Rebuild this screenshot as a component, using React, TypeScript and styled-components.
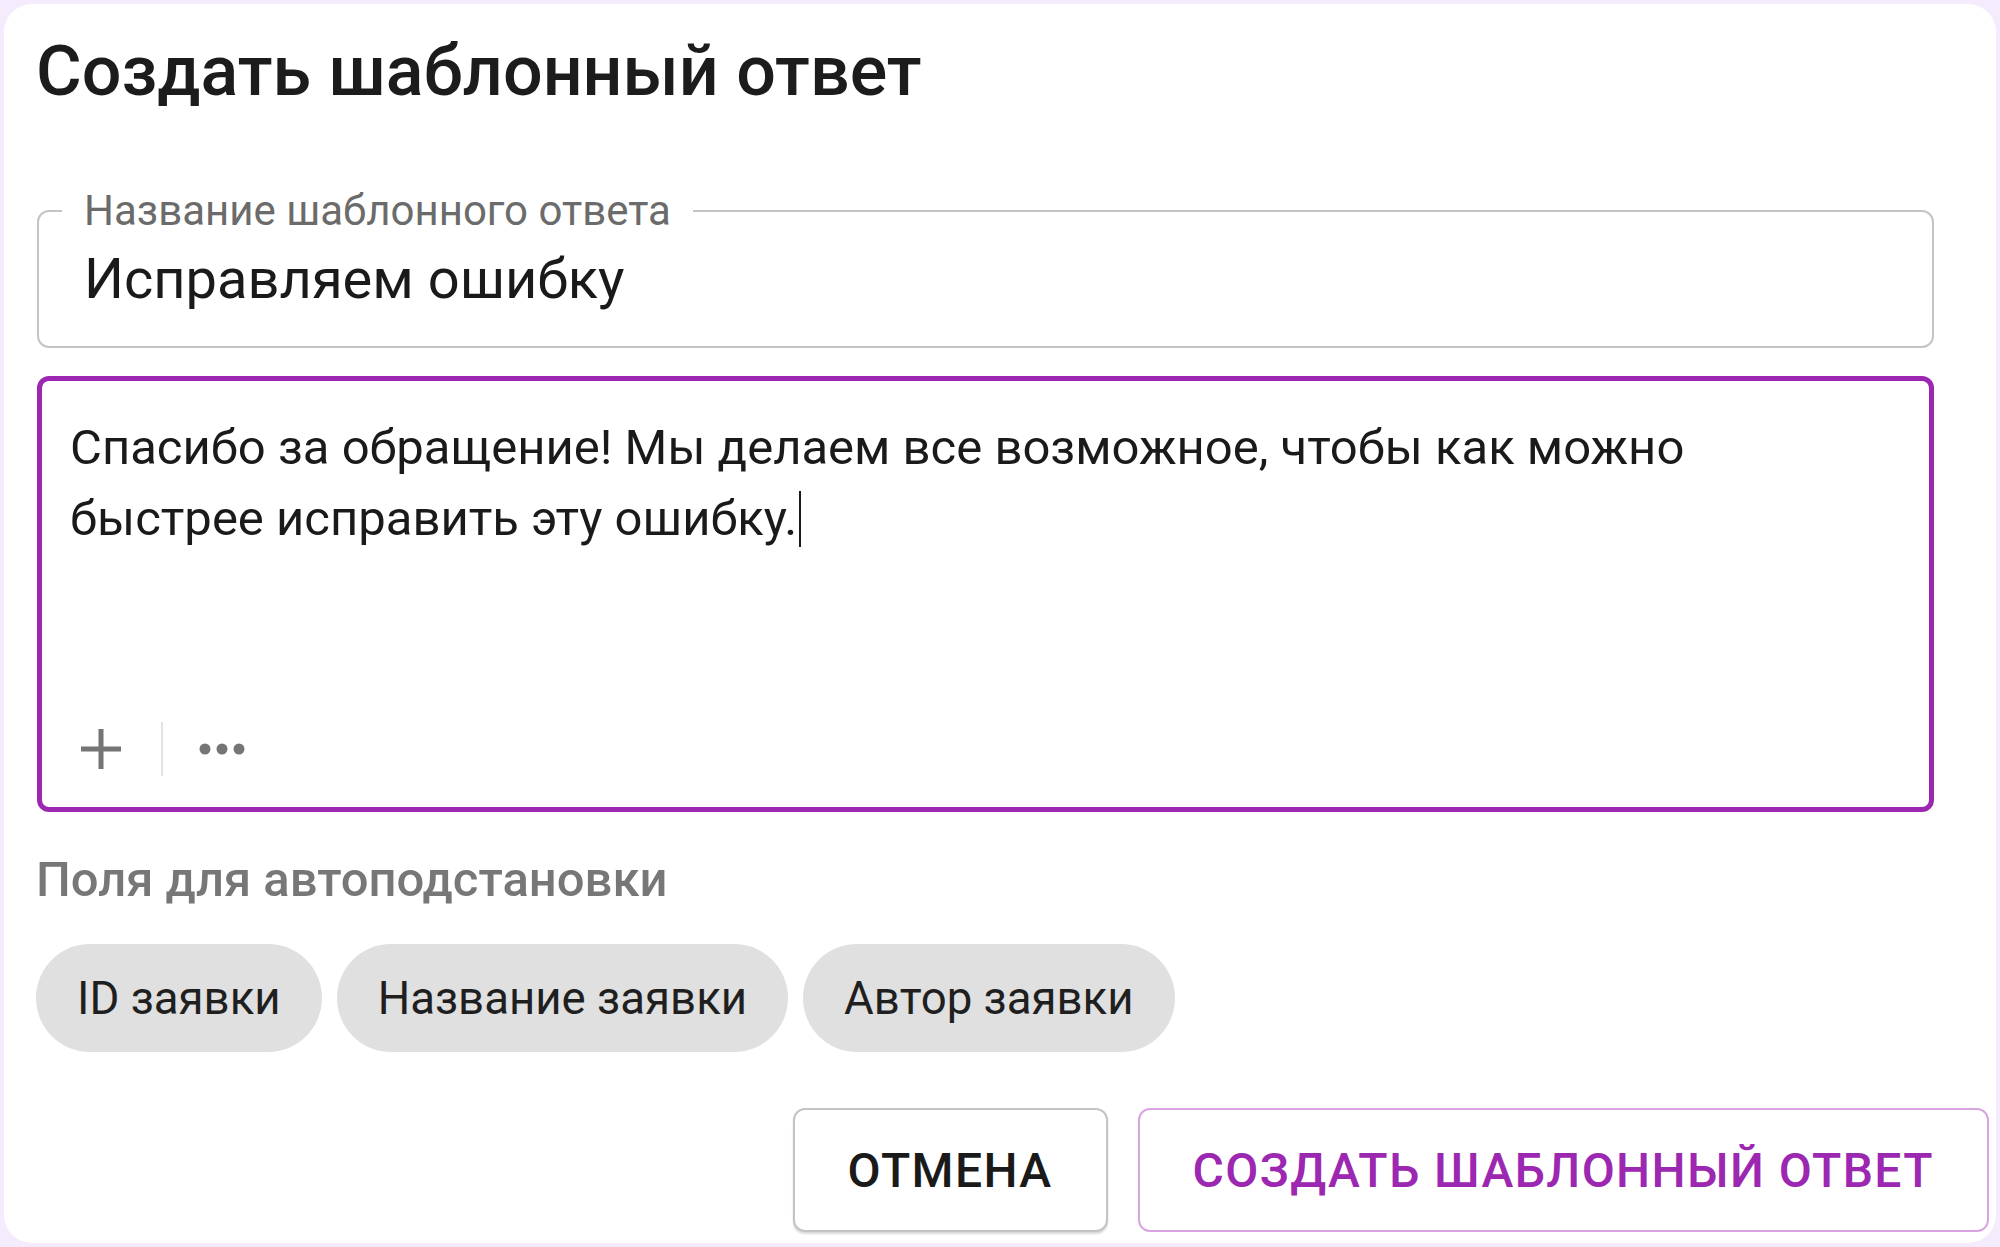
import React from 'react';
import styled, { createGlobalStyle } from 'styled-components';

const GlobalStyle = createGlobalStyle`
  html, body {
    margin: 0;
    padding: 0;
    background: #f4ecfc;
  }
  body {
    font-family: Roboto, "Noto Sans", "Liberation Sans", sans-serif;
    color: rgba(0, 0, 0, 0.87);
  }
`;

const chips = ['ID заявки', 'Название заявки', 'Автор заявки'];

const App = () => {
  return (
    <>
      <GlobalStyle />
      <Card>
        <Form>
          <Title>Создать шаблонный ответ</Title>
          <NameField>
            <FieldLabel>Название шаблонного ответа</FieldLabel>
            <FieldValue>Исправляем ошибку</FieldValue>
          </NameField>
          <Editor>
            <EditorText>
              Спасибо за обращение! Мы делаем все возможное, чтобы как можно
              <br />
              быстрее исправить эту ошибку.
              <Caret />
            </EditorText>
            <Toolbar>
              <ToolButton aria-label="Добавить">
                <svg width="44" height="44" viewBox="0 0 44 44">
                  <path d="M22 2v40M2 22h40" stroke="#757575" strokeWidth="5" fill="none" />
                </svg>
              </ToolButton>
              <ToolDivider />
              <ToolButton aria-label="Ещё">
                <svg width="48" height="14" viewBox="0 0 48 14">
                  <circle cx="7" cy="7" r="5.5" fill="#757575" />
                  <circle cx="24" cy="7" r="5.5" fill="#757575" />
                  <circle cx="41" cy="7" r="5.5" fill="#757575" />
                </svg>
              </ToolButton>
            </Toolbar>
          </Editor>
          <SectionLabel>Поля для автоподстановки</SectionLabel>
          <ChipRow>
            {chips.map((c) => (
              <Chip key={c}>{c}</Chip>
            ))}
          </ChipRow>
        </Form>
        <Actions>
          <Button>Отмена</Button>
          <Button $primary>Создать шаблонный ответ</Button>
        </Actions>
      </Card>
    </>
  );
};

const Card = styled.div`
  box-sizing: border-box;
  margin: 4px;
  height: 1239px;
  background: #fff;
  border-radius: 28px;
  padding: 32px 7px 11px 32px;
  display: flex;
  flex-direction: column;
`;

const Form = styled.div`
  margin-right: 55px;
  display: flex;
  flex-direction: column;
`;

const Title = styled.h1`
  margin: 0;
  font-size: 70px;
  line-height: 70px;
  font-weight: 500;
  color: #1c1c1c;
`;

const NameField = styled.fieldset`
  box-sizing: border-box;
  margin: 84px 0 0 1px;
  padding: 0 45px 33px;
  border: 2px solid #c4c4c4;
  border-radius: 12px;
  min-width: 0;
`;

const FieldLabel = styled.legend`
  margin-left: -22px;
  padding: 0 22px;
  font-size: 42px;
  line-height: 42px;
  color: #6b6b6b;
`;

const FieldValue = styled.div`
  margin-top: 13px;
  font-size: 56px;
  line-height: 68px;
  color: #1a1a1a;
`;

const Editor = styled.div`
  box-sizing: border-box;
  margin: 28px 0 0 1px;
  height: 436px;
  border: 5px solid #9c27b0;
  border-radius: 12px;
  padding: 31px 28px 31px;
  display: flex;
  flex-direction: column;
`;

const EditorText = styled.div`
  flex: 1;
  font-size: 49px;
  line-height: 71px;
  color: #1a1a1a;
`;

const Caret = styled.span`
  display: inline-block;
  width: 2px;
  height: 56px;
  background: #1a1a1a;
  vertical-align: -12px;
  margin-left: 2px;
`;

const Toolbar = styled.div`
  display: flex;
  align-items: center;
  height: 54px;
  padding-left: 9px;
`;

const ToolButton = styled.button`
  border: 0;
  background: none;
  padding: 0;
  margin: 0;
  display: flex;
  align-items: center;
  cursor: pointer;
`;

const ToolDivider = styled.div`
  width: 2px;
  height: 54px;
  background: #e3e3e3;
  margin: 0 35px 0 38px;
`;

const SectionLabel = styled.div`
  margin-top: 41px;
  font-size: 49px;
  line-height: 54px;
  font-weight: 500;
  color: #777;
`;

const ChipRow = styled.div`
  margin-top: 37px;
  display: flex;
  gap: 15px;
`;

const Chip = styled.div`
  height: 108px;
  padding: 0 41px;
  border-radius: 54px;
  background: #e0e0e0;
  display: flex;
  align-items: center;
  font-size: 45.6px;
  color: #1f1f1f;
`;

const Actions = styled.div`
  margin-top: auto;
  display: flex;
  justify-content: flex-end;
  gap: 30px;
`;

const Button = styled.button<{ $primary?: boolean }>`
  box-sizing: border-box;
  height: 124px;
  padding: 0 53px;
  border-radius: 12px;
  background: #fff;
  border: 2px solid ${(p) => (p.$primary ? '#d9a5e0' : '#c4c4c4')};
  box-shadow: ${(p) => (p.$primary ? 'none' : '0 2px 2px rgba(0, 0, 0, 0.15)')};
  font-family: Roboto, "Noto Sans", "Liberation Sans", sans-serif;
  font-size: 48px;
  font-weight: 500;
  letter-spacing: 1.4px;
  text-transform: uppercase;
  color: ${(p) => (p.$primary ? '#9c27b0' : '#1a1a1a')};
  cursor: pointer;
`;

export default App;
